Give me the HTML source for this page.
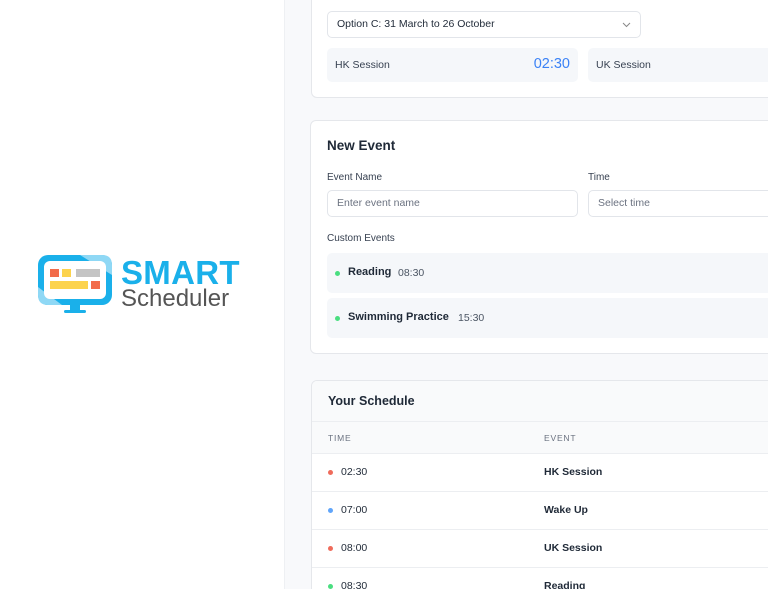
<!DOCTYPE html>
<html style="overflow:hidden;width:768px;height:589px"><head><style>
*{margin:0;padding:0;box-sizing:border-box}
body{width:768px;height:589px;overflow:hidden;background:#fff;font-family:"Liberation Sans",sans-serif;position:relative;color:#1f2937}
.bg{position:absolute;left:284px;top:0;width:484px;height:589px;background:#f8f9fb;border-left:1px solid #eef0f3}
.card{position:absolute;background:#fff;border:1px solid #e5e7eb;border-radius:6px}
.abs{position:absolute}
.input{position:absolute;border:1px solid #e2e5ea;border-radius:5px;background:#fff;font-size:10.5px;color:#6b7280;padding-left:9px;line-height:25px}
.pill{position:absolute;background:#f5f7fa;border-radius:5px}
.dot{position:absolute;width:5px;height:5px;border-radius:50%}
.row{position:absolute;left:0;right:0;height:38px;border-top:1px solid #eceef1;font-size:10.5px}
</style></head><body>
<svg class="abs" style="left:36px;top:253px" width="80" height="62" viewBox="0 0 80 62">
<rect x="2" y="2" width="74" height="50" rx="10" fill="#1ab0ea"/>
<path d="M44 2 L66 2 Q76 2 76 12 L76 22 Z" fill="#8fd8f5"/>
<path d="M2 34 L2 42 Q2 52 12 52 L26 52 Z" fill="#8fd8f5"/>
<rect x="8" y="8" width="62" height="38" rx="6" fill="#fff"/>
<rect x="14" y="16" width="9" height="8" fill="#f26b4a"/>
<rect x="26" y="16" width="9" height="8" fill="#fcd34d"/>
<rect x="40" y="16" width="24" height="8" fill="#c4c4c4"/>
<rect x="14" y="28" width="38" height="8" fill="#fcd34d"/>
<rect x="55" y="28" width="9" height="8" fill="#f26b4a"/>
<rect x="34" y="52" width="10" height="6" fill="#1ab0ea"/>
<rect x="28" y="57" width="22" height="3" rx="1.5" fill="#1ab0ea"/>
</svg>
<div class="abs" style="left:121px;top:254px;font-size:33px;font-weight:bold;color:#1ab0ea;letter-spacing:0.3px">SMART</div>
<div class="abs" style="left:121px;top:285px;font-size:24px;color:#555">Scheduler</div>

<div class="bg"></div>
<div class="card" style="left:311px;top:-10px;width:470px;height:108px">
  <div class="input" style="left:15px;top:20px;width:314px;height:27px;color:#1f2937">Option C: 31 March to 26 October
    <svg class="abs" style="right:9px;top:10px" width="9" height="6" viewBox="0 0 9 6"><path d="M1 1 L4.5 4.5 L8 1" stroke="#888" fill="none" stroke-width="1"/></svg></div>
  <div class="pill" style="left:15px;top:57px;width:251px;height:34px"><span class="abs" style="left:8px;top:11px;font-size:10.5px;color:#374151">HK Session</span><span class="abs" style="right:8px;top:8px;font-size:14.5px;color:#3b82f6">02:30</span></div>
  <div class="pill" style="left:276px;top:57px;width:200px;height:34px"><span class="abs" style="left:8px;top:11px;font-size:10.5px;color:#374151">UK Session</span></div>
</div>
<div class="card" style="left:310px;top:120px;width:470px;height:234px">
  <div class="abs" style="left:16px;top:17px;font-size:13.5px;font-weight:bold;color:#1f2937">New Event</div>
  <div class="abs" style="left:16px;top:51px;font-size:10px;color:#374151">Event Name</div>
  <div class="abs" style="left:277px;top:51px;font-size:10px;color:#374151">Time</div>
  <div class="input" style="left:16px;top:69px;width:251px;height:27px">Enter event name</div>
  <div class="input" style="left:277px;top:69px;width:200px;height:27px">Select time</div>
  <div class="abs" style="left:16px;top:112px;font-size:10px;color:#374151">Custom Events</div>
  <div class="pill" style="left:16px;top:132px;width:460px;height:40px"><div class="dot" style="left:8px;top:18px;background:#4ade80"></div><span class="abs" style="left:21px;top:13px;font-size:11px;font-weight:bold;color:#1f2937">Reading</span><span class="abs" style="left:71px;top:14px;font-size:10.5px;color:#4b5563">08:30</span></div>
  <div class="pill" style="left:16px;top:177px;width:460px;height:40px"><div class="dot" style="left:8px;top:18px;background:#4ade80"></div><span class="abs" style="left:21px;top:13px;font-size:11px;font-weight:bold;color:#1f2937">Swimming Practice</span><span class="abs" style="left:131px;top:14px;font-size:10.5px;color:#4b5563">15:30</span></div>
</div>
<div class="card" style="left:311px;top:380px;width:470px;height:230px;overflow:hidden">
  <div class="abs" style="left:0;top:0;right:0;height:40px;background:#f9fafb"></div>
  <div class="abs" style="left:16px;top:13px;font-size:12.5px;font-weight:bold">Your Schedule</div>
  <div class="abs" style="left:0;top:40px;right:0;height:33px;background:#f9fafb;border-top:1px solid #eceef1"></div>
  <div class="abs" style="left:16px;top:52px;font-size:8.5px;color:#6b7280;letter-spacing:0.8px">TIME</div>
  <div class="abs" style="left:232px;top:52px;font-size:8.5px;color:#6b7280;letter-spacing:0.8px">EVENT</div>
  <div class="row" style="top:72px"><div class="dot" style="left:16px;top:16px;background:#ef6b5b"></div><span class="abs" style="left:29px;top:12px">02:30</span><span class="abs" style="left:232px;top:12px;font-weight:bold">HK Session</span></div>
  <div class="row" style="top:110px"><div class="dot" style="left:16px;top:16px;background:#60a5fa"></div><span class="abs" style="left:29px;top:12px">07:00</span><span class="abs" style="left:232px;top:12px;font-weight:bold">Wake Up</span></div>
  <div class="row" style="top:148px"><div class="dot" style="left:16px;top:16px;background:#ef6b5b"></div><span class="abs" style="left:29px;top:12px">08:00</span><span class="abs" style="left:232px;top:12px;font-weight:bold">UK Session</span></div>
  <div class="row" style="top:186px"><div class="dot" style="left:16px;top:16px;background:#4ade80"></div><span class="abs" style="left:29px;top:12px">08:30</span><span class="abs" style="left:232px;top:12px;font-weight:bold">Reading</span></div>
</div>
</body></html>
